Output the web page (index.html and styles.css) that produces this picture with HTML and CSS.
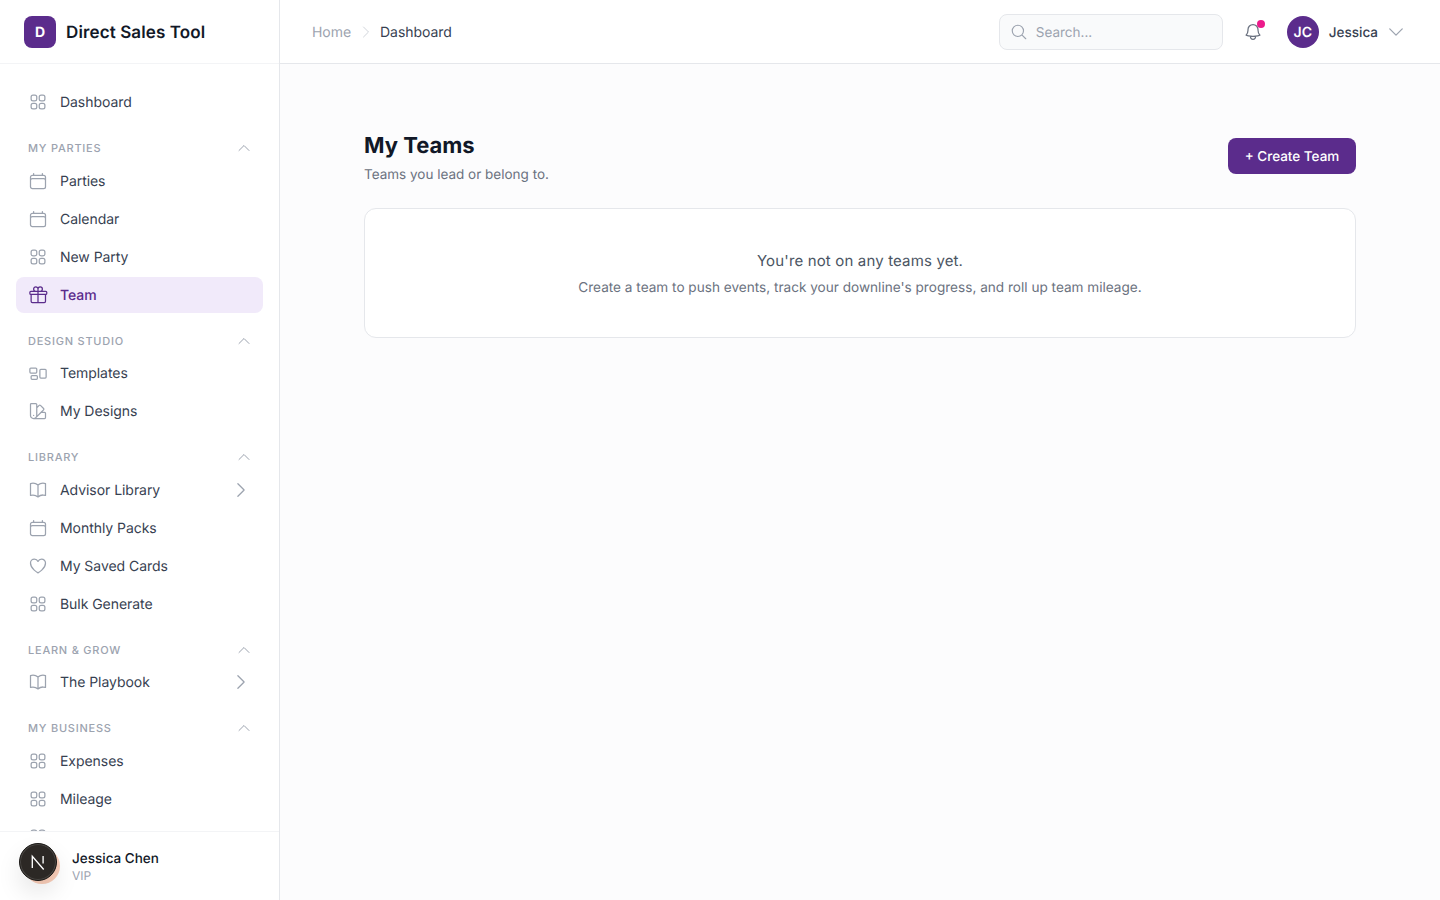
FILE: index.html
```html
<!DOCTYPE html>
<html lang="en">
<head>
<meta charset="utf-8">
<title>My Teams - Direct Sales Tool</title>
<link rel="stylesheet" href="styles.css">
</head>
<body>
<svg class="sprite" aria-hidden="true">
  <symbol id="grid" viewBox="0 0 24 24"><path d="M3.75 6A2.25 2.25 0 0 1 6 3.75h2.25A2.25 2.25 0 0 1 10.5 6v2.25a2.25 2.25 0 0 1-2.25 2.25H6a2.25 2.25 0 0 1-2.25-2.25V6ZM3.75 15.75A2.25 2.25 0 0 1 6 13.5h2.25a2.25 2.25 0 0 1 2.25 2.25V18a2.25 2.25 0 0 1-2.25 2.25H6A2.25 2.25 0 0 1 3.75 18v-2.25ZM13.5 6a2.25 2.25 0 0 1 2.25-2.25H18A2.25 2.25 0 0 1 20.25 6v2.25A2.25 2.25 0 0 1 18 10.5h-2.25a2.25 2.25 0 0 1-2.25-2.25V6ZM13.5 15.75a2.25 2.25 0 0 1 2.25-2.25H18a2.25 2.25 0 0 1 2.25 2.25V18A2.25 2.25 0 0 1 18 20.25h-2.25A2.25 2.25 0 0 1 13.5 18v-2.25Z"/></symbol>
  <symbol id="calendar" viewBox="0 0 24 24"><path d="M6.75 3v2.25M17.25 3v2.25M3 18.75V7.5a2.25 2.25 0 0 1 2.25-2.25h13.5A2.25 2.25 0 0 1 21 7.5v11.25m-18 0A2.25 2.25 0 0 0 5.25 21h13.5A2.25 2.25 0 0 0 21 18.75m-18 0v-7.5A2.25 2.25 0 0 1 5.25 9h13.5A2.25 2.25 0 0 1 21 11.25v7.5"/></symbol>
  <symbol id="gift" viewBox="0 0 24 24"><path d="M21 11.25v8.25a1.5 1.5 0 0 1-1.5 1.5H5.25a1.5 1.5 0 0 1-1.5-1.5v-8.25M12 4.875A2.625 2.625 0 1 0 9.375 7.5H12m0-2.625V7.5m0-2.625A2.625 2.625 0 1 1 14.625 7.5H12m0 0V21m-8.625-9.75h18c.621 0 1.125-.504 1.125-1.125v-1.5c0-.621-.504-1.125-1.125-1.125h-18c-.621 0-1.125.504-1.125 1.125v1.5c0 .621.504 1.125 1.125 1.125Z"/></symbol>
  <symbol id="group" viewBox="0 0 24 24"><path d="M2.25 7.125C2.25 6.504 2.754 6 3.375 6h6c.621 0 1.125.504 1.125 1.125v3.75c0 .621-.504 1.125-1.125 1.125h-6a1.125 1.125 0 0 1-1.125-1.125v-3.75ZM14.25 8.625c0-.621.504-1.125 1.125-1.125h5.25c.621 0 1.125.504 1.125 1.125v8.25c0 .621-.504 1.125-1.125 1.125h-5.25a1.125 1.125 0 0 1-1.125-1.125v-8.25ZM3.75 16.125c0-.621.504-1.125 1.125-1.125h5.25c.621 0 1.125.504 1.125 1.125v2.25c0 .621-.504 1.125-1.125 1.125h-5.25a1.125 1.125 0 0 1-1.125-1.125v-2.25Z"/></symbol>
  <symbol id="swatch" viewBox="0 0 24 24"><path d="M4.098 19.902a3.75 3.75 0 0 0 5.304 0l6.401-6.402M6.75 21A3.75 3.75 0 0 1 3 17.25V4.125C3 3.504 3.504 3 4.125 3h5.25c.621 0 1.125.504 1.125 1.125v4.072M6.75 21a3.75 3.75 0 0 0 3.75-3.75V8.197M6.75 21h13.125c.621 0 1.125-.504 1.125-1.125v-5.25c0-.621-.504-1.125-1.125-1.125h-4.072M10.5 8.197l2.88-2.88c.438-.439 1.15-.439 1.59 0l3.712 3.713c.44.44.44 1.152 0 1.59l-2.879 2.88M6.75 17.25h.008v.008H6.75v-.008Z"/></symbol>
  <symbol id="book" viewBox="0 0 24 24"><path d="M12 6.042A8.967 8.967 0 0 0 6 3.75c-1.052 0-2.062.18-3 .512v14.25A8.987 8.987 0 0 1 6 18c2.305 0 4.408.867 6 2.292m0-14.25a8.966 8.966 0 0 1 6-2.292c1.052 0 2.062.18 3 .512v14.25A8.987 8.987 0 0 0 18 18a8.967 8.967 0 0 0-6 2.292m0-14.25v14.25"/></symbol>
  <symbol id="heart" viewBox="0 0 24 24"><path d="M21 8.25c0-2.485-2.099-4.5-4.688-4.5-1.935 0-3.597 1.126-4.312 2.733-.715-1.607-2.377-2.733-4.313-2.733C5.1 3.75 3 5.765 3 8.25c0 7.22 9 12 9 12s9-4.78 9-12Z"/></symbol>
  <symbol id="up" viewBox="0 0 24 24"><path d="m4.5 15.75 7.5-7.5 7.5 7.5"/></symbol>
  <symbol id="right" viewBox="0 0 24 24"><path d="m8.25 4.5 7.5 7.5-7.5 7.5"/></symbol>
  <symbol id="down" viewBox="0 0 24 24"><path d="m4.5 8.25 7.5 7.5 7.5-7.5"/></symbol>
  <symbol id="search" viewBox="0 0 24 24"><path d="m21 21-5.197-5.197m0 0A7.5 7.5 0 1 0 5.196 5.196a7.5 7.5 0 0 0 10.607 10.607Z"/></symbol>
  <symbol id="bell" viewBox="0 0 24 24"><path d="M14.857 17.082a23.848 23.848 0 0 0 5.454-1.31A8.967 8.967 0 0 1 18 9.75V9A6 6 0 0 0 6 9v.75a8.967 8.967 0 0 1-2.312 6.022c1.733.64 3.56 1.085 5.455 1.31m5.714 0a24.255 24.255 0 0 1-5.714 0m5.714 0a3 3 0 1 1-5.714 0"/></symbol>
</svg>

<div class="app">
  <aside class="sidebar">
    <div class="brand">
      <div class="brand-mark">D</div>
      <div class="brand-name">Direct Sales Tool</div>
    </div>
    <nav class="nav">
      <div class="group">
        <a class="item"><svg class="icon"><use href="#grid"/></svg><span>Dashboard</span></a>
      </div>
      <div class="group">
        <div class="label"><span>MY PARTIES</span><svg class="caret"><use href="#up"/></svg></div>
        <a class="item"><svg class="icon"><use href="#calendar"/></svg><span>Parties</span></a>
        <a class="item"><svg class="icon"><use href="#calendar"/></svg><span>Calendar</span></a>
        <a class="item"><svg class="icon"><use href="#grid"/></svg><span>New Party</span></a>
        <a class="item active"><svg class="icon"><use href="#gift"/></svg><span>Team</span></a>
      </div>
      <div class="group">
        <div class="label"><span>DESIGN STUDIO</span><svg class="caret"><use href="#up"/></svg></div>
        <a class="item"><svg class="icon"><use href="#group"/></svg><span>Templates</span></a>
        <a class="item"><svg class="icon"><use href="#swatch"/></svg><span>My Designs</span></a>
      </div>
      <div class="group">
        <div class="label"><span>LIBRARY</span><svg class="caret"><use href="#up"/></svg></div>
        <a class="item"><svg class="icon"><use href="#book"/></svg><span>Advisor Library</span><svg class="more"><use href="#right"/></svg></a>
        <a class="item"><svg class="icon"><use href="#calendar"/></svg><span>Monthly Packs</span></a>
        <a class="item"><svg class="icon"><use href="#heart"/></svg><span>My Saved Cards</span></a>
        <a class="item"><svg class="icon"><use href="#grid"/></svg><span>Bulk Generate</span></a>
      </div>
      <div class="group">
        <div class="label"><span>LEARN &amp; GROW</span><svg class="caret"><use href="#up"/></svg></div>
        <a class="item"><svg class="icon"><use href="#book"/></svg><span>The Playbook</span><svg class="more"><use href="#right"/></svg></a>
      </div>
      <div class="group">
        <div class="label"><span>MY BUSINESS</span><svg class="caret"><use href="#up"/></svg></div>
        <a class="item"><svg class="icon"><use href="#grid"/></svg><span>Expenses</span></a>
        <a class="item"><svg class="icon"><use href="#grid"/></svg><span>Mileage</span></a>
        <a class="item"><svg class="icon"><use href="#grid"/></svg></a>
      </div>
    </nav>
    <div class="profile">
      <div class="profile-avatar"></div>
      <div class="profile-text">
        <div class="profile-name">Jessica Chen</div>
        <div class="profile-tier">VIP</div>
      </div>
      <div class="dev-badge">
        <svg viewBox="0 0 16 16" class="dev-logo"><path d="M4.2 12V4.2L11.8 13"/><path d="M11.4 4v5"/></svg>
      </div>
    </div>
  </aside>

  <div class="column">
    <header class="topbar">
      <div class="crumbs">
        <span class="crumb-home">Home</span>
        <svg class="crumb-sep"><use href="#right"/></svg>
        <span class="crumb-now">Dashboard</span>
      </div>
      <div class="top-actions">
        <div class="search"><svg class="search-icon"><use href="#search"/></svg><span class="search-text">Search...</span></div>
        <div class="bell"><svg class="bell-icon"><use href="#bell"/></svg><i class="bell-dot"></i></div>
        <div class="user">
          <div class="user-avatar">JC</div>
          <span class="user-name">Jessica</span>
          <svg class="user-caret"><use href="#down"/></svg>
        </div>
      </div>
    </header>
    <main class="main">
      <div class="page-head">
        <div>
          <h1 class="title">My Teams</h1>
          <p class="subtitle">Teams you lead or belong to.</p>
        </div>
        <button class="primary">+ Create Team</button>
      </div>
      <section class="empty">
        <p class="empty-title">You're not on any teams yet.</p>
        <p class="empty-text">Create a team to push events, track your downline's progress, and roll up team mileage.</p>
      </section>
    </main>
  </div>
</div>
</body>
</html>
```
FILE: styles.css
```css
* { box-sizing: border-box; }
html, body { margin: 0; height: 100%; }
body {
  font-family: Inter, "Liberation Sans", sans-serif;
  font-size: 14px;
  line-height: 1.5;
  color: #111827;
  background: #fcfcfd;
  overflow: hidden;
  text-rendering: geometricPrecision;
}
.sprite { display: none; }
svg { fill: none; stroke: currentColor; stroke-width: 1.5; stroke-linecap: round; stroke-linejoin: round; flex: none; }

.app { display: flex; height: 900px; }

.sidebar {
  width: 280px;
  flex: none;
  display: flex;
  flex-direction: column;
  background: #fff;
  border-right: 1px solid #e5e7eb;
}
.brand {
  height: 64px;
  flex: none;
  display: flex;
  align-items: center;
  gap: 10px;
  padding-left: 24px;
  border-bottom: 1px solid #f3f4f6;
  line-height: normal;
}
.brand-mark {
  width: 32px;
  height: 32px;
  padding-top: 1px;
  border-radius: 8px;
  background: #5b2c8c;
  color: #fff;
  font-size: 14px;
  font-weight: 700;
  display: flex;
  align-items: center;
  justify-content: center;
}
.brand-name { padding-top: 2px; font-size: 17px; letter-spacing: 0.12px; font-weight: 600; color: #111827; }

.nav {
  flex: 1;
  min-height: 0;
  overflow: hidden;
  padding: 20px 16px 0;
  display: flex;
  flex-direction: column;
  gap: 16px;
}
.group { display: flex; flex-direction: column; gap: 2px; flex: none; }
.label {
  display: flex;
  align-items: center;
  justify-content: space-between;
  padding: 4px 12px;
  font-size: 11px;
  line-height: 16.5px;
  font-weight: 500;
  letter-spacing: 0.77px;
  color: #9ca3af;
}
.caret { width: 16px; height: 16px; color: #9ca3af; margin-right: -1px; }
.item {
  height: 36px;
  display: flex;
  align-items: center;
  gap: 12px;
  padding: 0 12px;
  border-radius: 8px;
  font-size: 14px;
  letter-spacing: -0.05px;
  color: #374151;
  flex: none;
}
.item span { flex: 1; padding-top: 1px; }
.icon { width: 20px; height: 20px; color: #9ca3af; }
.more { width: 20px; height: 20px; color: #9ca3af; }
.item.active { background: #f1eafa; color: #5b2c8c; font-weight: 500; }
.item.active .icon { color: #5b2c8c; }

.profile {
  position: relative;
  height: 69px;
  flex: none;
  display: flex;
  align-items: center;
  gap: 12px;
  padding: 0 24px;
  background: #fff;
  border-top: 1px solid #f3f4f6;
}
.profile-avatar { width: 36px; height: 36px; border-radius: 50%; background: #f9cdb8; flex: none; }
.profile-name { font-size: 13.5px; line-height: 20px; font-weight: 500; color: #111827; }
.profile-tier { font-size: 12px; line-height: 14px; color: #9ca3af; }
.dev-badge {
  position: absolute;
  left: 19px;
  top: 11px;
  width: 38px;
  height: 38px;
  border-radius: 50%;
  background: #2c2825;
  border: 1px solid #1a1816;
  box-shadow: inset 0 0 0 1px #4a4744, 0 12px 24px rgba(0, 0, 0, 0.1);
  display: flex;
  align-items: center;
  justify-content: center;
}
.dev-logo { width: 24px; height: 24px; color: #fff; stroke-width: 0.9; stroke-linecap: butt; stroke-linejoin: miter; }

.column { flex: 1; min-width: 0; display: flex; flex-direction: column; }
.topbar {
  height: 64px;
  flex: none;
  display: flex;
  align-items: center;
  justify-content: space-between;
  padding: 0 34px 0 32px;
  background: #fff;
  border-bottom: 1px solid #e5e7eb;
  line-height: normal;
}
.crumbs { display: flex; align-items: center; gap: 6.5px; font-size: 14px; letter-spacing: -0.05px; }
.crumb-home { color: #9ca3af; padding-top: 2px; }
.crumb-sep { width: 16px; height: 16px; color: #d1d5db; }
.crumb-now { color: #374151; padding-top: 2px; }
.top-actions { display: flex; align-items: center; }
.search {
  width: 224px;
  height: 36px;
  display: flex;
  align-items: center;
  gap: 8px;
  padding-left: 10px;
  background: #f9fafb;
  border: 1px solid #e5e7eb;
  border-radius: 8px;
  color: #9ca3af;
  font-size: 13.5px;
}
.search-text { padding-top: 2px; }
.search-icon { width: 18px; height: 18px; color: #9ca3af; }
.bell { position: relative; width: 20px; height: 20px; margin-left: 20px; }
.bell-icon { width: 20px; height: 20px; color: #6b7280; display: block; }
.bell-dot {
  position: absolute;
  right: -2px;
  top: -2px;
  width: 8px;
  height: 8px;
  border-radius: 50%;
  background: #ec1a8b;
}
.user { display: flex; align-items: center; margin-left: 24px; }
.user-avatar {
  width: 32px;
  height: 32px;
  padding-top: 2px;
  border-radius: 50%;
  background: #5b2c8c;
  color: #fff;
  font-size: 14px;
  font-weight: 600;
  display: flex;
  align-items: center;
  justify-content: center;
}
.user-name { margin-left: 10px; padding-top: 2px; font-size: 13.5px; font-weight: 500; color: #374151; }
.user-caret { width: 20px; height: 20px; margin-left: 8px; color: #9ca3af; }

.main { flex: 1; padding: 64px 84px; }
.page-head { display: flex; align-items: flex-start; justify-content: space-between; margin-bottom: 22px; }
.title { margin: 0; font-size: 22px; line-height: 36px; font-weight: 700; color: #111827; }
.subtitle { margin: 0; font-size: 13.5px; line-height: 22px; color: #6b7280; }
.primary {
  height: 36px;
  width: 128px;
  margin-top: 10px;
  padding: 1px 0 0;
  border: 0;
  border-radius: 8px;
  background: #5b2c8c;
  color: #fff;
  font: 500 13.5px Inter, "Liberation Sans", sans-serif;
  text-rendering: geometricPrecision;
}
.empty {
  height: 130px;
  background: #fff;
  border: 1px solid #e5e7eb;
  border-radius: 12px;
  padding-top: 40px;
  text-align: center;
}
.empty-title { margin: 0; font-size: 15px; letter-spacing: 0.15px; line-height: 24px; color: #4b5563; }
.empty-text { margin: 5px 0 0; font-size: 13.6px; line-height: 20.4px; color: #6b7280; }
```
